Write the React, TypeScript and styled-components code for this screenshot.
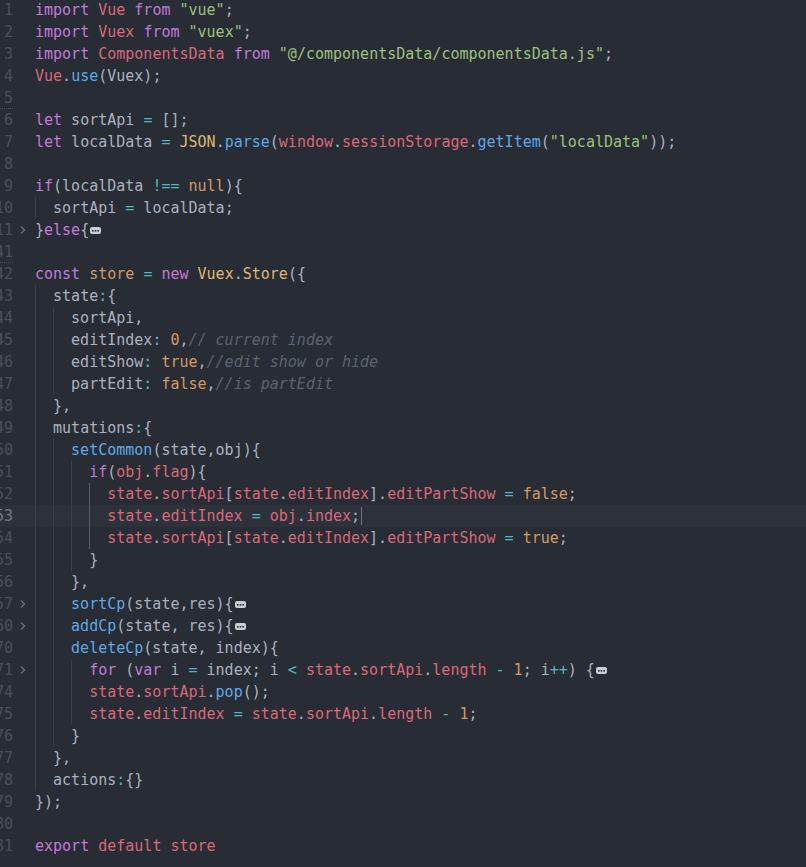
import React from "react";
import styled, { createGlobalStyle } from "styled-components";

type Kind = "k" | "v" | "s" | "f" | "o" | "n" | "y" | "p" | "c";
type Tok = [Kind, string];
type Line = {
  no: number;
  indent: number;
  toks: Tok[];
  fold?: boolean;
  folded?: boolean;
  active?: boolean;
  sep?: boolean;
};

const colors: Record<Kind, string> = {
  k: "#c07bd9",
  v: "#d9697a",
  s: "#9fc07e",
  f: "#5ea9e6",
  o: "#56b6c2",
  n: "#d19a66",
  y: "#dcb876",
  p: "#abb2bf",
  c: "#5c6370",
};

const lines: Line[] = [
  { no: 1, indent: 0, toks: [["k", "import"], ["p", " "], ["v", "Vue"], ["p", " "], ["k", "from"], ["p", " "], ["s", '"vue"'], ["p", ";"]] },
  { no: 2, indent: 0, toks: [["k", "import"], ["p", " "], ["v", "Vuex"], ["p", " "], ["k", "from"], ["p", " "], ["s", '"vuex"'], ["p", ";"]] },
  { no: 3, indent: 0, toks: [["k", "import"], ["p", " "], ["v", "ComponentsData"], ["p", " "], ["k", "from"], ["p", " "], ["s", '"@/componentsData/componentsData.js"'], ["p", ";"]] },
  { no: 4, indent: 0, toks: [["v", "Vue"], ["p", "."], ["f", "use"], ["p", "(Vuex);"]] },
  { no: 5, indent: 0, toks: [], sep: true },
  { no: 6, indent: 0, toks: [["k", "let"], ["p", " sortApi "], ["o", "="], ["p", " [];"]] },
  { no: 7, indent: 0, toks: [["k", "let"], ["p", " localData "], ["o", "="], ["p", " "], ["y", "JSON"], ["p", "."], ["f", "parse"], ["p", "("], ["v", "window"], ["p", "."], ["v", "sessionStorage"], ["p", "."], ["f", "getItem"], ["p", "("], ["s", '"localData"'], ["p", "));"]] },
  { no: 8, indent: 0, toks: [] },
  { no: 9, indent: 0, toks: [["k", "if"], ["p", "(localData "], ["o", "!=="], ["p", " "], ["n", "null"], ["p", "){"]] },
  { no: 10, indent: 1, toks: [["p", "sortApi "], ["o", "="], ["p", " localData;"]] },
  { no: 11, indent: 0, fold: true, folded: true, toks: [["p", "}"], ["k", "else"], ["p", "{"]] },
  { no: 41, indent: 0, toks: [], sep: true },
  { no: 42, indent: 0, toks: [["k", "const"], ["p", " "], ["n", "store"], ["p", " "], ["o", "="], ["p", " "], ["k", "new"], ["p", " "], ["y", "Vuex"], ["p", "."], ["y", "Store"], ["p", "({"]] },
  { no: 43, indent: 1, toks: [["p", "state"], ["o", ":"], ["p", "{"]] },
  { no: 44, indent: 2, toks: [["p", "sortApi,"]] },
  { no: 45, indent: 2, toks: [["p", "editIndex"], ["o", ":"], ["p", " "], ["n", "0"], ["p", ","], ["c", "// current index"]] },
  { no: 46, indent: 2, toks: [["p", "editShow"], ["o", ":"], ["p", " "], ["n", "true"], ["p", ","], ["c", "//edit show or hide"]] },
  { no: 47, indent: 2, toks: [["p", "partEdit"], ["o", ":"], ["p", " "], ["n", "false"], ["p", ","], ["c", "//is partEdit"]] },
  { no: 48, indent: 1, toks: [["p", "},"]] },
  { no: 49, indent: 1, toks: [["p", "mutations"], ["o", ":"], ["p", "{"]] },
  { no: 50, indent: 2, toks: [["f", "setCommon"], ["p", "(state,obj){"]] },
  { no: 51, indent: 3, toks: [["k", "if"], ["p", "("], ["v", "obj"], ["p", "."], ["v", "flag"], ["p", "){"]] },
  { no: 52, indent: 4, toks: [["v", "state"], ["p", "."], ["v", "sortApi"], ["p", "["], ["v", "state"], ["p", "."], ["v", "editIndex"], ["p", "]."], ["v", "editPartShow"], ["p", " "], ["o", "="], ["p", " "], ["n", "false"], ["p", ";"]] },
  { no: 53, indent: 4, active: true, toks: [["v", "state"], ["p", "."], ["v", "editIndex"], ["p", " "], ["o", "="], ["p", " "], ["v", "obj"], ["p", "."], ["v", "index"], ["p", ";"]] },
  { no: 54, indent: 4, toks: [["v", "state"], ["p", "."], ["v", "sortApi"], ["p", "["], ["v", "state"], ["p", "."], ["v", "editIndex"], ["p", "]."], ["v", "editPartShow"], ["p", " "], ["o", "="], ["p", " "], ["n", "true"], ["p", ";"]] },
  { no: 55, indent: 3, toks: [["p", "}"]] },
  { no: 56, indent: 2, toks: [["p", "},"]] },
  { no: 57, indent: 2, fold: true, folded: true, toks: [["f", "sortCp"], ["p", "(state,res){"]] },
  { no: 60, indent: 2, fold: true, folded: true, toks: [["f", "addCp"], ["p", "(state, res){"]] },
  { no: 70, indent: 2, toks: [["f", "deleteCp"], ["p", "(state, index){"]] },
  { no: 71, indent: 3, fold: true, folded: true, toks: [["k", "for"], ["p", " ("], ["k", "var"], ["p", " i "], ["o", "="], ["p", " index; i "], ["o", "<"], ["p", " "], ["v", "state"], ["p", "."], ["v", "sortApi"], ["p", "."], ["v", "length"], ["p", " "], ["o", "-"], ["p", " "], ["n", "1"], ["p", "; i"], ["o", "++"], ["p", ") {"]] },
  { no: 74, indent: 3, toks: [["v", "state"], ["p", "."], ["v", "sortApi"], ["p", "."], ["f", "pop"], ["p", "();"]] },
  { no: 75, indent: 3, toks: [["v", "state"], ["p", "."], ["v", "editIndex"], ["p", " "], ["o", "="], ["p", " "], ["v", "state"], ["p", "."], ["v", "sortApi"], ["p", "."], ["v", "length"], ["p", " "], ["o", "-"], ["p", " "], ["n", "1"], ["p", ";"]] },
  { no: 76, indent: 2, toks: [["p", "}"]] },
  { no: 77, indent: 1, toks: [["p", "},"]] },
  { no: 78, indent: 1, toks: [["p", "actions"], ["o", ":"], ["p", "{}"]] },
  { no: 79, indent: 0, toks: [["p", "});"]] },
  { no: 80, indent: 0, toks: [] },
  { no: 81, indent: 0, toks: [["k", "export"], ["p", " "], ["v", "default"], ["p", " "], ["v", "store"]] },
];

const GlobalStyle = createGlobalStyle`
  html, body {
    margin: 0;
    padding: 0;
    background: #282c34;
    overflow: hidden;
  }
`;

const Editor = styled.div`
  width: 806px;
  height: 867px;
  background: #282c34;
  overflow: hidden;
  display: flex;
  flex-direction: column;
  padding-top: 0;
  margin-top: -1px;
  font-family: "DejaVu Sans Mono", "Liberation Mono", monospace;
  font-size: 15px;
`;

const Row = styled.div<{ $active?: boolean }>`
  display: flex;
  height: 22px;
  line-height: 22px;
  flex-shrink: 0;
  background: ${({ $active }) => ($active ? "#2d313a" : "transparent")};
`;

const Gutter = styled.div<{ $sep?: boolean }>`
  width: 35px;
  flex-shrink: 0;
  display: flex;
  position: relative;
  &::after {
    content: "";
    display: ${({ $sep }) => ($sep ? "block" : "none")};
    position: absolute;
    left: 0;
    width: 13px;
    bottom: 0;
    border-bottom: 1px dotted #4a4f58;
  }
`;

const Num = styled.div<{ $active?: boolean }>`
  width: 13px;
  display: flex;
  justify-content: flex-end;
  white-space: nowrap;
  color: ${({ $active }) => ($active ? "#737984" : "#4b5059")};
`;

const FoldBox = styled.div`
  width: 22px;
  display: flex;
  align-items: center;
  padding-left: 7px;
  box-sizing: border-box;
`;

const Code = styled.div`
  flex: 1;
  display: flex;
  white-space: pre;
  color: #abb2bf;
`;

const Guide = styled.span<{ $hot?: boolean }>`
  display: inline-block;
  width: 2ch;
  height: 22px;
  flex-shrink: 0;
  box-sizing: border-box;
  border-left: 1px solid ${({ $hot }) => ($hot ? "#575c66" : "#393e47")};
`;

const Span = styled.span<{ $k: Kind }>`
  color: ${({ $k }) => colors[$k]};
  font-style: ${({ $k }) => ($k === "c" ? "italic" : "normal")};
`;

const Cursor = styled.span`
  display: inline-block;
  width: 0;
  height: 18px;
  margin-top: 2px;
  margin-left: 1px;
  border-left: 1px solid #6f7580;
`;

const Ellipsis = styled.span`
  display: inline-flex;
  align-items: center;
  margin-left: 1px;
`;

const Chevron = () => (
  <svg width="6" height="10" viewBox="0 0 6 10">
    <path d="M1 1.5 L4.5 5 L1 8.5" fill="none" stroke="#6b717c" strokeWidth="1.3" />
  </svg>
);

const Folded = () => (
  <Ellipsis>
    <svg width="11" height="7" viewBox="0 0 11 7">
      <rect x="0" y="0" width="11" height="7" rx="2" fill="#c9cdd4" />
      <rect x="2" y="3" width="1.6" height="1.6" fill="#282c34" />
      <rect x="4.7" y="3" width="1.6" height="1.6" fill="#282c34" />
      <rect x="7.4" y="3" width="1.6" height="1.6" fill="#282c34" />
    </svg>
  </Ellipsis>
);

const App = () => {
  return (
    <>
      <GlobalStyle />
      <Editor>
        {lines.map((l) => (
          <Row key={l.no} $active={l.active}>
            <Gutter $sep={l.sep}>
              <Num $active={l.active}>{l.no}</Num>
              <FoldBox>{l.fold && <Chevron />}</FoldBox>
            </Gutter>
            <Code>
              {Array.from({ length: l.indent }).map((_, i) => (
                <Guide key={i} $hot={l.indent === 4 && i === 3} />
              ))}
              {l.toks.map(([k, t], i) => (
                <Span key={i} $k={k}>
                  {t}
                </Span>
              ))}
              {l.folded && <Folded />}
              {l.active && <Cursor />}
            </Code>
          </Row>
        ))}
      </Editor>
    </>
  );
};

export default App;
